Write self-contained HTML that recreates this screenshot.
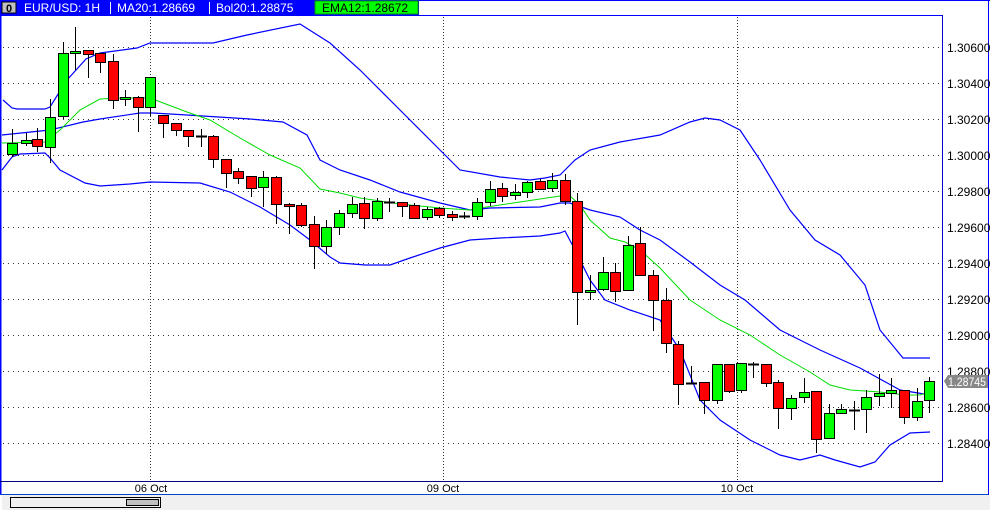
<!DOCTYPE html>
<html><head><meta charset="utf-8"><style>
html,body{margin:0;padding:0;background:#fff;width:990px;height:510px;overflow:hidden}
svg{display:block}
text{font-family:"Liberation Sans",sans-serif}
</style></head><body>
<svg width="990" height="510" viewBox="0 0 990 510" xmlns="http://www.w3.org/2000/svg" shape-rendering="crispEdges">
<rect x="0" y="0" width="990" height="510" fill="#fff"/>
<rect x="0" y="0" width="419" height="15" fill="#0000ff"/>
<line x1="0" y1="0.5" x2="990" y2="0.5" stroke="#0000ff"/>
<line x1="988.5" y1="0" x2="988.5" y2="495" stroke="#0000ff"/>
<rect x="2" y="2" width="14" height="11" fill="#c0c0c0" stroke="#000"/>
<text x="9" y="12" font-size="11" font-weight="bold" text-anchor="middle" fill="#000">0</text>
<text x="24" y="12" font-size="12" fill="#fff">EUR/USD: 1H</text>
<line x1="110.5" y1="2" x2="110.5" y2="14" stroke="#fff"/>
<text x="117" y="12" font-size="12" fill="#fff">MA20:1.28669</text>
<line x1="209.5" y1="2" x2="209.5" y2="14" stroke="#fff"/>
<text x="216" y="12" font-size="12" fill="#fff">Bol20:1.28875</text>
<rect x="315" y="1" width="103" height="13" fill="#00ff00" stroke="#009900"/>
<text x="322" y="12" font-size="12" fill="#000">EMA12:1.28672</text>
<rect x="0.5" y="15.5" width="942" height="466" fill="#fff" stroke="#0000cc"/>
<line x1="0" y1="15.5" x2="942" y2="15.5" stroke="#0000ff" stroke-width="1"/>
<line x1="0.5" y1="15" x2="0.5" y2="495" stroke="#0000ff" stroke-width="2"/>
<g stroke="#333" stroke-width="1" stroke-dasharray="1,4">
<line x1="3" y1="47.5" x2="940" y2="47.5"/><line x1="3" y1="83.5" x2="940" y2="83.5"/>
<line x1="3" y1="119.5" x2="940" y2="119.5"/><line x1="3" y1="155.5" x2="940" y2="155.5"/>
<line x1="3" y1="191.5" x2="940" y2="191.5"/><line x1="3" y1="227.5" x2="940" y2="227.5"/>
<line x1="3" y1="263.5" x2="940" y2="263.5"/><line x1="3" y1="299.5" x2="940" y2="299.5"/>
<line x1="3" y1="335.5" x2="940" y2="335.5"/><line x1="3" y1="371.5" x2="940" y2="371.5"/>
<line x1="3" y1="407.5" x2="940" y2="407.5"/><line x1="3" y1="443.5" x2="940" y2="443.5"/>
<line x1="150.5" y1="17" x2="150.5" y2="480" stroke-dasharray="1,2"/>
<line x1="443.5" y1="17" x2="443.5" y2="480" stroke-dasharray="1,2"/>
<line x1="737.5" y1="17" x2="737.5" y2="480" stroke-dasharray="1,2"/>
</g>
<g fill="none" shape-rendering="auto">
<polyline stroke="#0000ff" stroke-width="1.2" points="3,100 12,108 17,109 45,109 50,107 67,80 86,59 100,53 137,48 150,43 213,43 247,35 300,24 330,43 360,70 400,110 440,150 460,170 500,177 530,180 545,178 560,175 575,160 590,150 620,142 660,135 690,122 705,118 720,120 740,130 760,160 790,210 815,240 840,255 865,285 880,330 903,358 930,358"/>
<polyline stroke="#0000ff" stroke-width="1.2" points="2,135 50,130 83,122 100,119 140,113 153,113 187,115 250,119 283,122 307,135 320,160 340,170 370,180 400,192 440,203 470,210 490,208 540,207 560,203 570,203 590,210 620,217 640,230 660,240 690,262 720,285 745,300 780,330 820,350 860,368 900,390 930,395"/>
<polyline stroke="#0000ff" stroke-width="1.2" points="2,170 12,157 20,154 45,153 50,158 60,170 85,183 100,186 130,184 150,182 200,183 230,192 260,207 290,225 310,240 330,257 340,263 365,265 390,265 410,258 440,248 470,240 500,238 540,236 560,233 565,231 575,250 590,280 605,300 630,310 660,320 670,335 680,350 700,400 720,420 750,440 780,455 800,460 820,455 835,460 860,467 875,462 890,445 910,433 930,432"/>
<polyline stroke="#00dd00" stroke-width="1" points="2,143 45,142 60,130 80,110 100,99 120,98 150,98 187,112 210,120 240,138 270,155 300,168 320,189 340,193 360,198 400,204 440,208 470,210 480,208 520,202 560,196 570,196 580,205 590,220 610,238 625,242 640,250 660,268 690,300 720,320 750,335 780,355 810,372 830,385 850,390 880,392 905,395 920,395 930,392"/>
</g>
<g stroke="#000" stroke-width="1">
<line x1="12.5" y1="129" x2="12.5" y2="157"/><rect x="7.5" y="143.5" width="10" height="11" fill="#0f0"/>
<line x1="26.5" y1="133" x2="26.5" y2="146"/><rect x="21.5" y="140.5" width="10" height="3" fill="#0f0"/>
<line x1="37.5" y1="128" x2="37.5" y2="152"/><rect x="32.5" y="139.5" width="10" height="7" fill="#f00"/>
<line x1="50.5" y1="99" x2="50.5" y2="163"/><rect x="45.5" y="117.5" width="10" height="30" fill="#0f0"/>
<line x1="63.5" y1="42" x2="63.5" y2="119"/><rect x="58.5" y="53.5" width="10" height="63" fill="#0f0"/>
<line x1="75.5" y1="27" x2="75.5" y2="70"/><rect x="70.5" y="51.5" width="10" height="2" fill="#0f0"/>
<line x1="88.5" y1="50" x2="88.5" y2="78"/><rect x="83.5" y="50.5" width="10" height="4" fill="#f00"/>
<line x1="100.5" y1="53" x2="100.5" y2="73"/><rect x="95.5" y="53.5" width="10" height="9" fill="#f00"/>
<line x1="113.5" y1="54" x2="113.5" y2="109"/><rect x="108.5" y="61.5" width="10" height="39" fill="#f00"/>
<line x1="125.5" y1="90" x2="125.5" y2="106"/><rect x="120.5" y="97.5" width="10" height="2" fill="#0f0"/>
<line x1="138.5" y1="96" x2="138.5" y2="132"/><rect x="133.5" y="97.5" width="10" height="10" fill="#f00"/>
<line x1="150.5" y1="77" x2="150.5" y2="116"/><rect x="145.5" y="77.5" width="10" height="30" fill="#0f0"/>
<line x1="163.5" y1="115" x2="163.5" y2="138"/><rect x="158.5" y="115.5" width="10" height="8" fill="#f00"/>
<line x1="176.5" y1="123" x2="176.5" y2="136"/><rect x="171.5" y="123.5" width="10" height="7" fill="#f00"/>
<line x1="188.5" y1="130" x2="188.5" y2="147"/><rect x="183.5" y="130.5" width="10" height="6" fill="#f00"/>
<line x1="201.5" y1="129" x2="201.5" y2="147"/><line x1="196" y1="136.5" x2="207" y2="136.5" stroke-width="2"/>
<line x1="213.5" y1="135" x2="213.5" y2="168"/><rect x="208.5" y="136.5" width="10" height="23" fill="#f00"/>
<line x1="226.5" y1="159" x2="226.5" y2="188"/><rect x="221.5" y="159.5" width="10" height="14" fill="#f00"/>
<line x1="238.5" y1="168" x2="238.5" y2="184"/><rect x="233.5" y="171.5" width="10" height="7" fill="#f00"/>
<line x1="251.5" y1="176" x2="251.5" y2="197"/><rect x="246.5" y="176.5" width="10" height="12" fill="#f00"/>
<line x1="263.5" y1="171" x2="263.5" y2="207"/><rect x="258.5" y="177.5" width="10" height="10" fill="#0f0"/>
<line x1="276.5" y1="176" x2="276.5" y2="224"/><rect x="271.5" y="177.5" width="10" height="27" fill="#f00"/>
<line x1="289.5" y1="203" x2="289.5" y2="234"/><rect x="284.5" y="204.5" width="10" height="2" fill="#f00"/>
<line x1="301.5" y1="203" x2="301.5" y2="227"/><rect x="296.5" y="205.5" width="10" height="20" fill="#f00"/>
<line x1="314.5" y1="216" x2="314.5" y2="269"/><rect x="309.5" y="224.5" width="10" height="22" fill="#f00"/>
<line x1="326.5" y1="220" x2="326.5" y2="254"/><rect x="321.5" y="227.5" width="10" height="19" fill="#0f0"/>
<line x1="339.5" y1="210" x2="339.5" y2="235"/><rect x="334.5" y="213.5" width="10" height="14" fill="#0f0"/>
<line x1="352.5" y1="197" x2="352.5" y2="218"/><rect x="347.5" y="204.5" width="10" height="9" fill="#0f0"/>
<line x1="364.5" y1="197" x2="364.5" y2="229"/><rect x="359.5" y="203.5" width="10" height="15" fill="#f00"/>
<line x1="377.5" y1="198" x2="377.5" y2="221"/><rect x="372.5" y="201.5" width="10" height="17" fill="#0f0"/>
<line x1="389.5" y1="198" x2="389.5" y2="212"/><line x1="384" y1="202.5" x2="395" y2="202.5" stroke-width="2"/>
<line x1="402.5" y1="202" x2="402.5" y2="217"/><rect x="397.5" y="202.5" width="10" height="4" fill="#f00"/>
<line x1="414.5" y1="203" x2="414.5" y2="218"/><rect x="409.5" y="205.5" width="10" height="13" fill="#f00"/>
<line x1="427.5" y1="207" x2="427.5" y2="220"/><rect x="422.5" y="209.5" width="10" height="8" fill="#0f0"/>
<line x1="439.5" y1="207" x2="439.5" y2="218"/><rect x="434.5" y="208.5" width="10" height="7" fill="#f00"/>
<line x1="452.5" y1="211" x2="452.5" y2="221"/><rect x="447.5" y="214.5" width="10" height="3" fill="#f00"/>
<line x1="464.5" y1="212" x2="464.5" y2="219"/><line x1="459" y1="216.5" x2="470" y2="216.5" stroke-width="2"/>
<line x1="477.5" y1="198" x2="477.5" y2="220"/><rect x="472.5" y="202.5" width="10" height="14" fill="#0f0"/>
<line x1="490.5" y1="181" x2="490.5" y2="206"/><rect x="485.5" y="189.5" width="10" height="13" fill="#0f0"/>
<line x1="502.5" y1="183" x2="502.5" y2="202"/><rect x="497.5" y="188.5" width="10" height="8" fill="#f00"/>
<line x1="515.5" y1="184" x2="515.5" y2="200"/><rect x="510.5" y="192.5" width="10" height="3" fill="#0f0"/>
<line x1="527.5" y1="181" x2="527.5" y2="198"/><rect x="522.5" y="182.5" width="10" height="10" fill="#0f0"/>
<line x1="540.5" y1="179" x2="540.5" y2="190"/><rect x="535.5" y="181.5" width="10" height="8" fill="#f00"/>
<line x1="552.5" y1="173" x2="552.5" y2="192"/><rect x="547.5" y="180.5" width="10" height="8" fill="#0f0"/>
<line x1="565.5" y1="174" x2="565.5" y2="205"/><rect x="560.5" y="180.5" width="10" height="21" fill="#f00"/>
<line x1="577.5" y1="193" x2="577.5" y2="325"/><rect x="572.5" y="201.5" width="10" height="91" fill="#f00"/>
<line x1="590.5" y1="275" x2="590.5" y2="300"/><rect x="585.5" y="290.5" width="10" height="2" fill="#0f0"/>
<line x1="603.5" y1="257" x2="603.5" y2="291"/><rect x="598.5" y="272.5" width="10" height="17" fill="#0f0"/>
<line x1="615.5" y1="263" x2="615.5" y2="302"/><rect x="610.5" y="272.5" width="10" height="19" fill="#f00"/>
<line x1="628.5" y1="236" x2="628.5" y2="290"/><rect x="623.5" y="245.5" width="10" height="45" fill="#0f0"/>
<line x1="640.5" y1="227" x2="640.5" y2="275"/><rect x="635.5" y="243.5" width="10" height="32" fill="#f00"/>
<line x1="653.5" y1="270" x2="653.5" y2="331"/><rect x="648.5" y="275.5" width="10" height="25" fill="#f00"/>
<line x1="666.5" y1="288" x2="666.5" y2="353"/><rect x="661.5" y="300.5" width="10" height="43" fill="#f00"/>
<line x1="678.5" y1="341" x2="678.5" y2="405"/><rect x="673.5" y="344.5" width="10" height="40" fill="#f00"/>
<line x1="691.5" y1="366" x2="691.5" y2="384"/><line x1="686" y1="383.5" x2="697" y2="383.5" stroke-width="2"/>
<line x1="704.5" y1="382" x2="704.5" y2="414"/><rect x="699.5" y="382.5" width="10" height="18" fill="#f00"/>
<line x1="717.5" y1="364" x2="717.5" y2="404"/><rect x="712.5" y="364.5" width="10" height="36" fill="#0f0"/>
<line x1="729.5" y1="364" x2="729.5" y2="393"/><rect x="724.5" y="364.5" width="10" height="27" fill="#f00"/>
<line x1="741.5" y1="363" x2="741.5" y2="393"/><rect x="736.5" y="363.5" width="10" height="27" fill="#0f0"/>
<line x1="753.5" y1="362" x2="753.5" y2="378"/><line x1="748" y1="364.5" x2="759" y2="364.5" stroke-width="2"/>
<line x1="766.5" y1="364" x2="766.5" y2="387"/><rect x="761.5" y="364.5" width="10" height="19" fill="#f00"/>
<line x1="778.5" y1="380" x2="778.5" y2="429"/><rect x="773.5" y="382.5" width="10" height="26" fill="#f00"/>
<line x1="791.5" y1="395" x2="791.5" y2="420"/><rect x="786.5" y="398.5" width="10" height="10" fill="#0f0"/>
<line x1="804.5" y1="378" x2="804.5" y2="403"/><rect x="799.5" y="392.5" width="10" height="5" fill="#0f0"/>
<line x1="816.5" y1="391" x2="816.5" y2="453"/><rect x="811.5" y="391.5" width="10" height="48" fill="#f00"/>
<line x1="829.5" y1="404" x2="829.5" y2="439"/><rect x="824.5" y="413.5" width="10" height="25" fill="#0f0"/>
<line x1="841.5" y1="404" x2="841.5" y2="413"/><rect x="836.5" y="409.5" width="10" height="4" fill="#0f0"/>
<line x1="854.5" y1="401" x2="854.5" y2="430"/><line x1="849" y1="410.5" x2="860" y2="410.5" stroke-width="2"/>
<line x1="866.5" y1="390" x2="866.5" y2="433"/><rect x="861.5" y="397.5" width="10" height="12" fill="#0f0"/>
<line x1="879.5" y1="374" x2="879.5" y2="406"/><rect x="874.5" y="393.5" width="10" height="3" fill="#0f0"/>
<line x1="891.5" y1="378" x2="891.5" y2="408"/><rect x="886.5" y="390.5" width="10" height="3" fill="#0f0"/>
<line x1="904.5" y1="390" x2="904.5" y2="424"/><rect x="899.5" y="390.5" width="10" height="27" fill="#f00"/>
<line x1="917.5" y1="388" x2="917.5" y2="421"/><rect x="912.5" y="401.5" width="10" height="16" fill="#0f0"/>
<line x1="929.5" y1="377" x2="929.5" y2="413"/><rect x="924.5" y="381.5" width="10" height="19" fill="#0f0"/>
</g>
<g font-size="12" fill="#000">
<text x="947" y="52">1.30600</text><text x="947" y="88">1.30400</text>
<text x="947" y="124">1.30200</text><text x="947" y="160">1.30000</text>
<text x="947" y="196">1.29800</text><text x="947" y="232">1.29600</text>
<text x="947" y="268">1.29400</text><text x="947" y="304">1.29200</text>
<text x="947" y="340">1.29000</text><text x="947" y="376">1.28800</text>
<text x="947" y="412">1.28600</text><text x="947" y="448">1.28400</text>
</g>
<polygon points="944,381 948,375 988,375 988,388 948,388" fill="#888"/>
<text x="948" y="386" font-size="12" fill="#fff" textLength="38" lengthAdjust="spacingAndGlyphs">1.28745</text>
<line x1="0" y1="481.5" x2="942" y2="481.5" stroke="#000080"/>
<line x1="0" y1="494.5" x2="988" y2="494.5" stroke="#0044cc"/>
<g font-size="11" fill="#000" text-anchor="middle">
<text x="151" y="492">06 Oct</text><text x="443" y="492">09 Oct</text><text x="737" y="492">10 Oct</text>
</g>
<rect x="2" y="495" width="988" height="15" fill="#f0f0f0"/>
<rect x="10.5" y="497.5" width="150" height="10" fill="#f0f0f0" stroke="#000"/>
<rect x="126.5" y="499.5" width="32" height="6" fill="#c0c0c0" stroke="#000"/>
</svg>
</body></html>
